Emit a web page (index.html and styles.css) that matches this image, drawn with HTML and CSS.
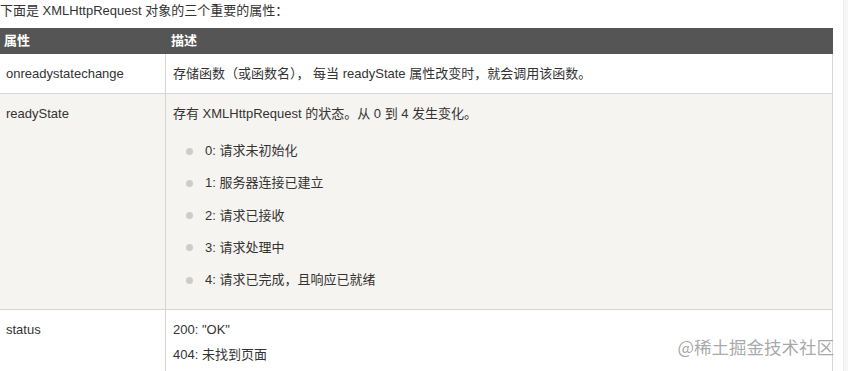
FILE: index.html
```html
<!DOCTYPE html>
<html lang="zh">
<head>
<meta charset="utf-8">
<link rel="stylesheet" href="styles.css">
</head>
<body>
<div class="page">
  <main class="content">
    <p class="intro">下面是 XMLHttpRequest 对象的三个重要的属性：</p>
    <table class="ref">
      <colgroup><col class="col-name"><col class="col-desc"></colgroup>
      <thead>
        <tr><th>属性</th><th>描述</th></tr>
      </thead>
      <tbody>
        <tr>
          <td><div class="line">onreadystatechange</div></td>
          <td><div class="line">存储函数（或函数名）， 每当 readyState 属性改变时，就会调用该函数。</div></td>
        </tr>
        <tr class="alt">
          <td><div class="line">readyState</div></td>
          <td>
            <div class="line">存有 XMLHttpRequest 的状态。从 0 到 4 发生变化。</div>
            <ul class="states">
              <li>0: 请求未初始化</li>
              <li>1: 服务器连接已建立</li>
              <li>2: 请求已接收</li>
              <li>3: 请求处理中</li>
              <li>4: 请求已完成，且响应已就绪</li>
            </ul>
          </td>
        </tr>
        <tr>
          <td><div class="line">status</div></td>
          <td>
            <div class="line gap">200: "OK"</div>
            <div class="line">404: 未找到页面</div>
          </td>
        </tr>
      </tbody>
    </table>
    <div class="watermark">@稀土掘金技术社区</div>
  </main>
  <div class="scroll-strip"></div>
</div>
</body>
</html>
```

FILE: styles.css
```css
html, body {
  margin: 0;
  padding: 0;
  background: #fff;
  overflow: hidden;
}
body {
  font-family: "Liberation Sans", Arial, "Noto Sans CJK SC", sans-serif;
  font-size: 13px;
  color: #333;
}
.page {
  display: flex;
  height: 371px;
}
.content {
  position: relative;
  width: 843px;
  flex: none;
}
.scroll-strip {
  flex: 1;
  background: #f6f6f6;
  border-left: 1px solid #eeeeee;
}
.intro {
  margin: 0;
  height: 22px;
  line-height: 22px;
}
.ref {
  margin: 6px 0 0 -2px;
  width: 835px;
  border-collapse: collapse;
  table-layout: fixed;
  border: 1px solid #d6d6d6;
}
.col-name { width: 167px; }
.ref th {
  background: #555555;
  color: #fff;
  font-weight: bold;
  text-align: left;
  height: 24px;
  padding: 0 5px;
  line-height: 24px;
  border: 1px solid #555555;
}
.ref td {
  border: 1px solid #d6d6d6;
  padding: 10px 7px 9px;
  line-height: 20px;
  vertical-align: top;
}
.ref tr.alt td {
  background: #f6f4f0;
}
.line {
  height: 20px;
  line-height: 20px;
  white-space: nowrap;
}
.line.gap {
  margin-bottom: 5px;
}
.states {
  list-style: none;
  margin: 17px 0 10px;
  padding: 0;
  display: flex;
  flex-direction: column;
  gap: 12.25px;
}
.states li {
  display: flex;
  align-items: center;
  height: 20px;
}
.states li::before {
  content: "";
  width: 7px;
  height: 7px;
  border-radius: 50%;
  background: #cccccc;
  margin: 0 12px 0 13px;
  flex: none;
}
.watermark {
  position: absolute;
  right: 9px;
  top: 335px;
  font-size: 17.5px;
  line-height: 24px;
  color: rgba(130, 130, 130, 0.7);
  font-family: "Noto Sans CJK SC", sans-serif;
}
```
